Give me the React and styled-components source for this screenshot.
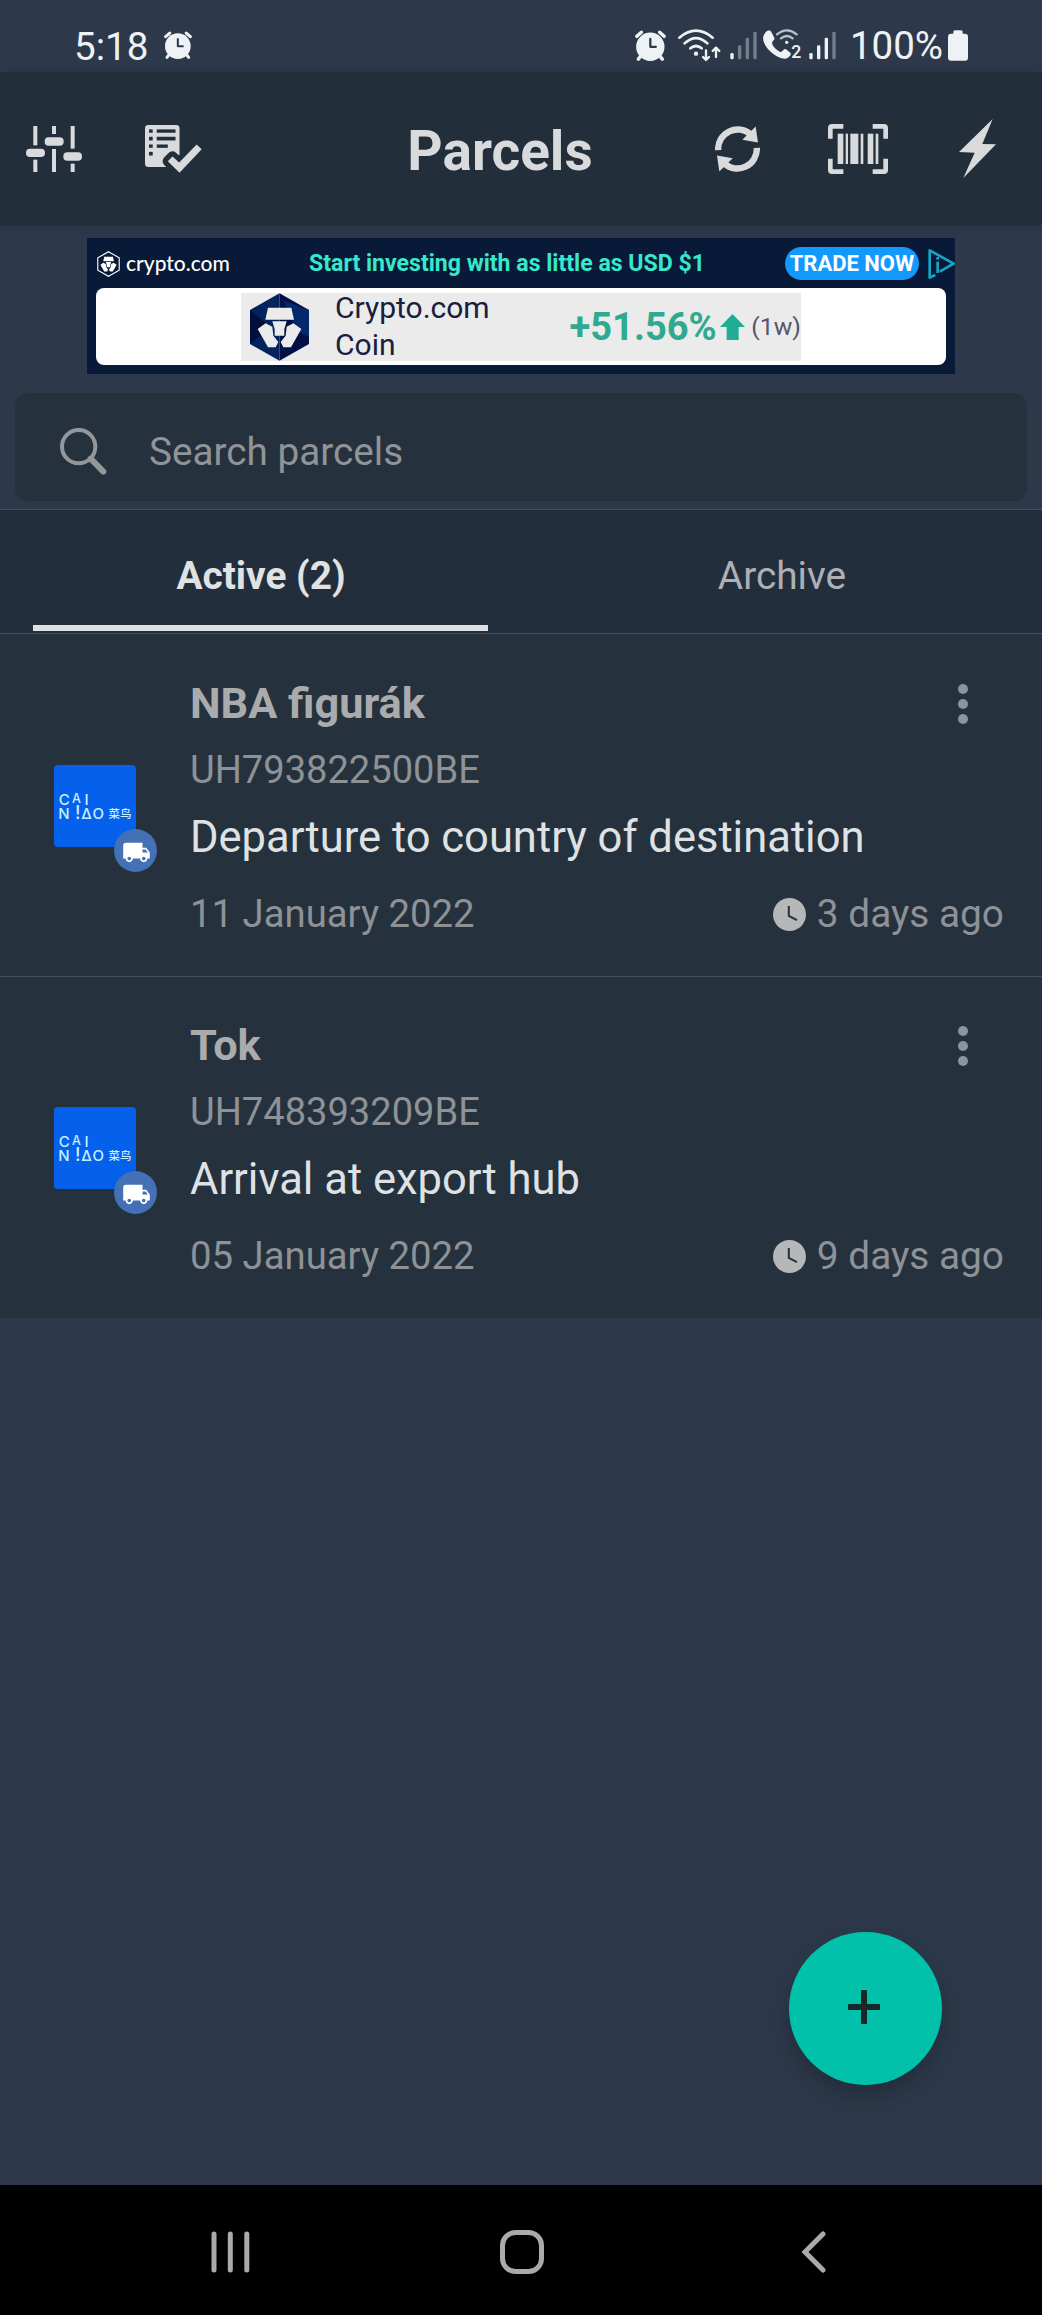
import React from 'react';
import styled, { createGlobalStyle } from 'styled-components';
import { MdLocalShipping } from 'react-icons/md';

const parcels = [
    {
        name: 'NBA figurák',
        code: 'UH793822500BE',
        status: 'Departure to country of destination',
        date: '11 January 2022',
        age: '3 days ago',
    },
    {
        name: 'Tok',
        code: 'UH748393209BE',
        status: 'Arrival at export hub',
        date: '05 January 2022',
        age: '9 days ago',
    },
];

/* ---------- status bar icons ---------- */

const AlarmIcon = ({ size }) => (
    <svg width={size} height={size} viewBox="0 0 83 83">
        <circle cx="41" cy="45" r="38" fill="#eef2f5" />
        <g stroke="#eef2f5" strokeWidth="9" strokeLinecap="round">
            <path d="M5 17L17 6M66 6l12 11M15 70l-6 8M67 70l6 8" />
        </g>
        <path d="M41 24v21h15" fill="none" stroke="#2d394a" strokeWidth="6" strokeLinecap="round" strokeLinejoin="round" />
    </svg>
);

const WifiIcon = () => (
    <svg width="43" height="33" viewBox="0 0 129 99">
        <g fill="none" stroke="#eef2f5" strokeWidth="8" strokeLinecap="round" strokeLinejoin="round">
            <path d="M4 26Q54 -16 104 26" />
            <path d="M20 43Q54 12 88 43" />
            <path d="M37 58Q54 44 71 58" />
            <path d="M84 64v28M75 84l9 9 9-9M114 84V56M104 66l10-10 10 10" strokeWidth="7" />
        </g>
        <circle cx="54" cy="74" r="6.5" fill="#eef2f5" />
    </svg>
);

const SignalIcon = ({ level }) => (
    <svg width="27" height="29" viewBox="0 0 81 87">
        {[66, 43, 20, 2].map((top, i) => (
            <rect
                key={top}
                x={1 + i * 23}
                y={top}
                width="10"
                height={85 - top}
                rx="4"
                fill={i < level ? '#eef2f5' : '#737e8a'}
            />
        ))}
    </svg>
);

const WifiCallIcon = () => (
    <svg width="40" height="33" viewBox="0 0 120 99">
        <path
            d="M4 16C8 6 20 0 25 9l9 17c3 8-7 10-7 16 3 12 15 23 26 27 7 0 8-12 16-8l13 10c6 7-7 17-16 18C38 88-5 50 1 22z"
            fill="#eef2f5"
        />
        <g fill="none" stroke="#b9c1c9" strokeWidth="7" strokeLinecap="round">
            <path d="M42 16Q72 -8 101 16" />
            <path d="M54 28Q72 14 89 28" />
        </g>
        <circle cx="71" cy="40" r="5" fill="#eef2f5" />
        <text x="85" y="88" fontFamily="Roboto" fontSize="53" fontWeight="500" fill="#eef2f5">2</text>
    </svg>
);

const BatteryIcon = () => (
    <svg width="20" height="31" viewBox="0 0 60 92">
        <rect x="16" y="0" width="28" height="20" rx="5" fill="#eef2f5" />
        <rect x="0" y="11" width="60" height="81" rx="9" fill="#eef2f5" />
    </svg>
);

/* ---------- header icons ---------- */

const SlidersIcon = () => (
    <svg width="56" height="46" viewBox="0 0 168 138" fill="#d9dadb">
        <rect x="22" y="0" width="12" height="58" />
        <rect x="22" y="101" width="12" height="37" />
        <rect x="0" y="68" width="57" height="25" rx="12" />
        <rect x="78" y="0" width="12" height="24" />
        <rect x="78" y="69" width="12" height="69" />
        <rect x="56" y="34" width="57" height="25" rx="12" />
        <rect x="134" y="0" width="12" height="68" />
        <rect x="134" y="113" width="12" height="25" />
        <rect x="112" y="79" width="56" height="25" rx="12" />
    </svg>
);

const ChecklistIcon = () => (
    <svg width="57" height="48" viewBox="0 0 170 143">
        <rect width="103" height="125" rx="10" fill="#d9dadb" />
        <g fill="#232e3b">
            <rect x="12" y="13" width="11" height="10" />
            <rect x="12" y="35" width="11" height="11" />
            <rect x="12" y="58" width="11" height="10" />
            <rect x="12" y="80" width="11" height="11" />
            <rect x="35" y="13" width="56" height="10" />
            <rect x="35" y="35" width="56" height="11" />
            <rect x="35" y="58" width="33" height="10" />
            <path d="M68 108l14-14 20 18 52-54 15 14-66 70z" stroke="#232e3b" strokeWidth="31" strokeLinejoin="round" />
        </g>
        <path d="M68 108l14-14 20 18 52-54 15 14-66 70z" fill="#d9dadb" />
    </svg>
);

const SyncIcon = () => (
    <svg width="45" height="46" viewBox="0 0 135 137">
        <g id="half">
            <path d="M9.500 72A58.500 59 0 0 1 108 26" fill="none" stroke="#d9dadb" strokeWidth="19" />
            <path d="M122 1l7 48-47-8z" fill="#d9dadb" />
        </g>
        <use href="#half" transform="rotate(180 67.500 68.500)" />
    </svg>
);

const ScanIcon = () => (
    <svg width="60" height="50" viewBox="0 0 180 150">
        <g fill="none" stroke="#d9dadb" strokeWidth="14">
            <path d="M7 44V12q0-5 5-5h34M134 7h34q5 0 5 5v32M173 104v34q0 5-5 5h-34M46 143H12q-5 0-5-5v-34" />
        </g>
        <g fill="#d9dadb">
            <rect x="29" y="29" width="17" height="91" />
            <rect x="53" y="29" width="7" height="91" />
            <rect x="67" y="29" width="24" height="91" />
            <rect x="98" y="29" width="8" height="91" />
            <rect x="119" y="29" width="17" height="91" />
            <rect x="143" y="29" width="8" height="91" />
        </g>
    </svg>
);

const BoltIcon = () => (
    <svg width="37" height="59" viewBox="0 0 111 177">
        <path d="M101 0L70 75l41 1L13 177l34-76-47-2z" fill="#d9dadb" />
    </svg>
);

/* ---------- ad ---------- */

const LionParts = () => (
    <>
        <path d="M54 43h70l8 36H46z" />
        <path d="M67 84h43l-7 24v19H74v-19z" />
        <path d="M23 107l24-17 20 10 3 27 15 19-8 16H54z" />
        <path d="M154 107l-24-17-20 10-3 27-15 19 8 16h23z" />
    </>
);

const LionBadge = () => (
    <svg width="59" height="68" viewBox="0 0 177 202">
        <path d="M88.500 0v202L0 152V50z" fill="#03235f" />
        <path d="M0 50l64 52-64 50z" fill="#020f3c" />
        <path d="M88.500 0v202L177 152V50z" fill="#021046" />
        <path d="M177 50l-76-28 40 90 36 20z" fill="#03296b" />
        <g fill="#ebebeb">
            <LionParts />
        </g>
    </svg>
);

const LionOutline = () => (
    <svg width="23" height="26" viewBox="-4 -4 185 210">
        <path d="M88.500 2L175 51v100l-86.500 49L2 151V51z" fill="none" stroke="#fff" strokeWidth="9" />
        <g fill="#fff">
            <LionParts />
        </g>
    </svg>
);

const AdChoicesIcon = () => (
    <svg width="27" height="30" viewBox="0 0 81 90" fill="none" stroke="#17a5c2">
        <path d="M22 78L5 86V4l72 40-42 24" strokeWidth="8" strokeLinejoin="round" />
        <path d="M29 38v34" strokeWidth="8" />
        <path d="M29 24v8" strokeWidth="8" />
    </svg>
);

const UpArrow = () => (
    <svg width="25" height="26" viewBox="0 0 75 78">
        <path d="M37.500 0L75 39H56v39H20V39H0z" fill="#1fae94" />
    </svg>
);

/* ---------- list icons ---------- */

const SearchIcon = () => (
    <svg width="47" height="47" viewBox="0 0 141 141" fill="none" stroke="#94979a">
        <circle cx="56" cy="56" r="50" strokeWidth="12" />
        <path d="M92 92l38 39" strokeWidth="18" strokeLinecap="round" />
    </svg>
);

const ClockIcon = () => (
    <svg width="33" height="33" viewBox="0 0 98 98">
        <circle cx="49" cy="49" r="49" fill="#b5b7b8" />
        <path d="M47 24v29l24 13" fill="none" stroke="#25313d" strokeWidth="6" />
    </svg>
);

const DotsIcon = () => (
    <svg width="10" height="40" viewBox="0 0 10 40" fill="#8995a2">
        <circle cx="5" cy="5" r="5" />
        <circle cx="5" cy="20" r="5" />
        <circle cx="5" cy="35" r="5" />
    </svg>
);

const CainiaoLogo = () => (
    <svg width="82" height="82" viewBox="0 0 82 82" fill="#c8f0ff">
        <g fontFamily="Inter, sans-serif" fontSize="15" fontWeight="500">
            <text x="4.800" y="39.500">C</text>
            <text x="18" y="37.500" fontSize="12.500">A</text>
            <text x="30.500" y="39.500">I</text>
            <text x="4.300" y="53.500">N</text>
            <text x="21" y="53.500" fontSize="18">!</text>
            <text x="27.300" y="53.500">Δ</text>
            <text x="38.500" y="53.500">O</text>
        </g>
        <text x="54.500" y="52.700" fontFamily="'Noto Sans CJK SC', sans-serif" fontSize="11.500" fontWeight="500">菜鸟</text>
    </svg>
);

const PlusIcon = () => (
    <svg width="32" height="34" viewBox="0 0 32 34" fill="#16282a">
        <rect x="0" y="14" width="32" height="6" rx="1" />
        <rect x="13" y="0" width="6" height="34" rx="1" />
    </svg>
);

const RecentsIcon = () => (
    <svg width="39" height="42" viewBox="0 0 39 42" stroke="#aaa" strokeWidth="5" strokeLinecap="round">
        <path d="M3 3v36M19.300 3v36M35.800 3v36" />
    </svg>
);

const HomeIcon = () => (
    <svg width="44" height="44" viewBox="0 0 44 44">
        <rect x="2.500" y="2.500" width="39" height="39" rx="13" fill="none" stroke="#aaa" strokeWidth="5" />
    </svg>
);

const BackIcon = () => (
    <svg width="25" height="42" viewBox="0 0 25 42" fill="none" stroke="#aaa" strokeWidth="5">
        <path d="M22 3L4 21l18 18" strokeLinecap="round" />
    </svg>
);

function App() {
    return (
        <>
            <GlobalStyle />
            <Screen>
                <StatusBar>
                    <StatusText>5:18</StatusText>
                    <StatusIcon $left={16}><AlarmIcon size={28} /></StatusIcon>
                    <StatusRight>
                        <AlarmIcon size={31} />
                        <StatusIcon $left={12}><WifiIcon /></StatusIcon>
                        <StatusIcon $left={9}><SignalIcon level={1} /></StatusIcon>
                        <StatusIcon $left={6}><WifiCallIcon /></StatusIcon>
                        <StatusIcon $left={6}><SignalIcon level={3} /></StatusIcon>
                        <Percent>100%</Percent>
                        <BatteryIcon />
                    </StatusRight>
                </StatusBar>

                <Header>
                    <HeaderGroup $gap={63}>
                        <SlidersIcon />
                        <ChecklistIcon />
                    </HeaderGroup>
                    <Title>Parcels</Title>
                    <HeaderGroup $gap={68}>
                        <SyncIcon />
                        <ScanIcon />
                        <Quick>
                            <BoltIcon />
                        </Quick>
                    </HeaderGroup>
                </Header>

                <Ad>
                    <AdTop>
                        <LionOutline />
                        <AdBrand>crypto.com</AdBrand>
                        <AdSlogan>Start investing with as little as USD $1</AdSlogan>
                        <AdButton>TRADE NOW</AdButton>
                        <AdChoicesIcon />
                    </AdTop>
                    <AdCard>
                        <AdPanel>
                            <LionBadge />
                            <CoinName>Crypto.com<br />Coin</CoinName>
                            <Gain>+51.56%</Gain>
                            <UpArrow />
                            <Period>(1w)</Period>
                        </AdPanel>
                    </AdCard>
                </Ad>

                <SearchBox>
                    <SearchIcon />
                    <Placeholder>Search parcels</Placeholder>
                </SearchBox>

                <Tabs>
                    <Tab $active>Active (2)</Tab>
                    <Tab>Archive</Tab>
                </Tabs>

                {parcels.map((parcel, index) => (
                    <Row key={parcel.code} $last={index === parcels.length - 1}>
                        <Courier>
                            <CainiaoLogo />
                            <Badge>
                                <MdLocalShipping size={29} />
                            </Badge>
                        </Courier>
                        <Details>
                            <NameLine>
                                <Name>{parcel.name}</Name>
                                <DotsIcon />
                            </NameLine>
                            <Code>{parcel.code}</Code>
                            <Status>{parcel.status}</Status>
                            <Footer>
                                <span>{parcel.date}</span>
                                <Age>
                                    <ClockIcon />
                                    {parcel.age}
                                </Age>
                            </Footer>
                        </Details>
                    </Row>
                ))}

                <AddButton>
                    <PlusIcon />
                </AddButton>

                <NavBar>
                    <RecentsIcon />
                    <Home>
                        <HomeIcon />
                    </Home>
                    <BackIcon />
                </NavBar>
            </Screen>
        </>
    );
}

const GlobalStyle = createGlobalStyle`
    * {
        box-sizing: border-box;
    }

    body {
        margin: 0;
        background: #2d394a;
        font-family: Roboto, sans-serif;
    }

    svg {
        display: block;
        flex-shrink: 0;
    }
`;

const Screen = styled.div`
    position: relative;
    width: 1042px;
    height: 2315px;
    display: flex;
    flex-direction: column;
    background: #2d394a;
    overflow: hidden;
    white-space: nowrap;
`;

const StatusBar = styled.div`
    height: 72px;
    display: flex;
    align-items: center;
    padding: 18px 74px 0 74px;
    color: #eef2f5;
    font-size: 38.6px;
`;

const StatusText = styled.span`
    line-height: 46px;
    padding-top: 3px;
`;

const StatusIcon = styled.span`
    margin-left: ${({ $left }) => $left}px;
`;

const StatusRight = styled.div`
    display: flex;
    align-items: center;
    margin-left: auto;
`;

const Percent = styled.span`
    margin: 2px 5px 0 14px;
    font-size: 38.5px;
    line-height: 46px;
`;

const Header = styled.header`
    height: 153px;
    display: flex;
    align-items: center;
    justify-content: space-between;
    padding: 0 46px 0 26px;
    background: #232e3b;
    box-shadow: 0 2px 8px rgba(20, 28, 38, 0.25);
`;

const HeaderGroup = styled.div`
    display: flex;
    align-items: center;
    gap: ${({ $gap }) => $gap}px;
`;

const Quick = styled.span`
    margin-left: 3px;
`;

const Title = styled.h1`
    margin: 5px 0 0 83px;
    font-size: 55px;
    font-weight: 700;
    color: #d9dadb;
`;

const Ad = styled.div`
    width: 868px;
    height: 136px;
    margin: 13px auto 0;
    padding: 0 9px;
    background: #081a38;
`;

const AdTop = styled.div`
    display: flex;
    align-items: center;
    height: 50px;
    margin-right: -9px;
    padding: 1px 0 0 1px;
`;

const AdBrand = styled.span`
    width: 184px;
    padding: 0 0 3px 6px;
    font-family: Lato, sans-serif;
    font-size: 21px;
    font-weight: 500;
    color: #fff;
`;

const AdSlogan = styled.span`
    width: 481px;
    padding-left: 5px;
    font-size: 23.1px;
    font-weight: 700;
    color: #37e8cb;
`;

const AdButton = styled.span`
    width: 134px;
    height: 33px;
    margin-right: 9px;
    border-radius: 17px;
    background: #1398fc;
    font-size: 22px;
    font-weight: 700;
    line-height: 33px;
    text-align: center;
    color: #fff;
`;

const AdCard = styled.div`
    width: 850px;
    height: 77px;
    padding: 5px 145px 4px;
    border-radius: 8px;
    background: #fff;
`;

const AdPanel = styled.div`
    display: flex;
    align-items: center;
    height: 68px;
    padding-left: 9px;
    background: #ebebeb;
`;

const CoinName = styled.span`
    width: 260px;
    padding: 0 0 2px 26px;
    font-size: 30px;
    line-height: 37px;
    color: #17203f;
`;

const Gain = styled.span`
    width: 152px;
    padding-left: 1px;
    font-size: 38px;
    font-weight: 700;
    color: #2fa98f;
`;

const Period = styled.span`
    margin: 0 0 2px 6px;
    font-size: 24.8px;
    color: #55556b;
`;

const SearchBox = styled.div`
    display: flex;
    align-items: center;
    height: 108px;
    margin: 19px 15px 8px;
    padding: 8px 0 0 45px;
    border-radius: 13px;
    background: #25313d;
`;

const Placeholder = styled.span`
    margin-left: 42px;
    font-size: 38.7px;
    color: #909498;
`;

const Tabs = styled.div`
    display: grid;
    grid-template-columns: 1fr 1fr;
    height: 125px;
    padding: 0 33px;
    column-gap: 66px;
    border-top: 1px solid #434f5c;
    border-bottom: 1px solid #434f5c;
    background: #232e3c;
`;

const Tab = styled.div`
    height: 121px;
    padding: 11px 0 0 1px;
    border-bottom: 6px solid ${({ $active }) => ($active ? '#dfe0e2' : 'transparent')};
    font-size: 38.8px;
    font-weight: ${({ $active }) => ($active ? 700 : 400)};
    line-height: 110px;
    text-align: center;
    color: ${({ $active }) => ($active ? '#e0e2e4' : '#adb0b5')};
`;

const Row = styled.div`
    display: flex;
    height: ${({ $last }) => ($last ? 341 : 343)}px;
    padding: ${({ $last }) => ($last ? 39 : 40)}px 38px 0 54px;
    border-bottom: ${({ $last }) => ($last ? 'none' : '1px solid #414e5a')};
    background: #25313d;
`;

const Courier = styled.div`
    position: relative;
    width: 82px;
    height: 82px;
    margin-top: 91px;
    border-radius: 4px;
    background: #0561ec;
`;

const Badge = styled.div`
    position: absolute;
    left: 60px;
    top: 64px;
    display: flex;
    align-items: center;
    justify-content: center;
    width: 43px;
    height: 43px;
    padding: 3px 0 0 2px;
    border-radius: 50%;
    background: #4470b5;
    color: #fff;
`;

const Details = styled.div`
    flex: 1;
    margin-left: 54px;
`;

const NameLine = styled.div`
    display: flex;
    align-items: center;
    justify-content: space-between;
    height: 60px;
    padding-right: 36px;
`;

const Name = styled.h2`
    margin: 0;
    font-size: 43.3px;
    font-weight: 700;
    line-height: 50px;
    color: #a9abac;
`;

const Code = styled.div`
    font-size: 38.1px;
    line-height: 73px;
    color: #8e9296;
`;

const Status = styled.div`
    font-size: 43.5px;
    line-height: 61px;
    color: #dfe2e5;
`;

const Footer = styled.div`
    display: flex;
    align-items: center;
    justify-content: space-between;
    font-size: 38.3px;
    line-height: 92px;
    color: #8e9296;
`;

const Age = styled.span`
    display: flex;
    align-items: center;
    gap: 11px;
    font-size: 38.8px;
`;

const AddButton = styled.div`
    position: absolute;
    right: 100px;
    bottom: 230px;
    display: flex;
    align-items: center;
    justify-content: center;
    width: 153px;
    height: 153px;
    padding: 0 3px 3px 0;
    border-radius: 50%;
    background: #02c1aa;
    box-shadow: 0 10px 22px rgba(18, 24, 34, 0.38);
`;

const NavBar = styled.nav`
    display: flex;
    align-items: center;
    justify-content: space-between;
    height: 130px;
    margin-top: auto;
    padding: 4px 216px 0 211px;
    background: #000;
`;

const Home = styled.span`
    margin-right: 7px;
`;

export default App;
